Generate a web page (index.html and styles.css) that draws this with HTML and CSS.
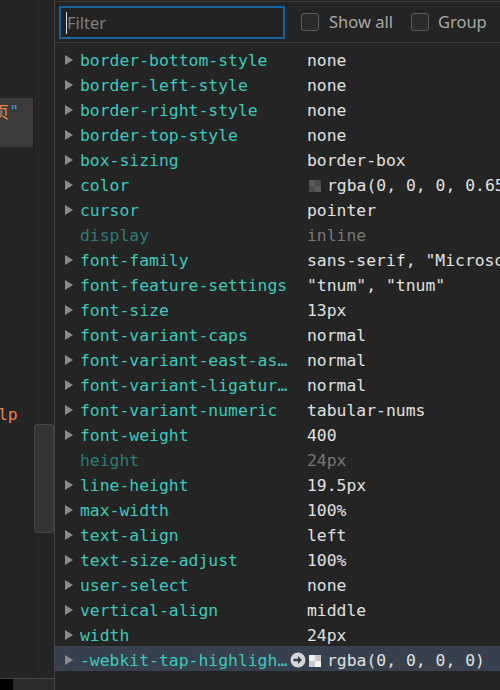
FILE: index.html
```html
<!DOCTYPE html>
<html>
<head>
<meta charset="utf-8">
<link rel="stylesheet" href="styles.css">
</head>
<body>
<div class="shell">
  <div class="side">
    <div class="side-top">
      <div class="editor">
        <div class="ed-line ed-sel"><span class="str">首页</span><span class="quote">"</span></div>
        <div class="ed-line ed-lp"><span class="str">lp</span></div>
      </div>
      <div class="track"><div class="thumb"></div></div>
    </div>
    <div class="side-bottom"><div class="blk"></div><div class="grey"></div></div>
  </div>
  <div class="panel">
    <div class="toolbar">
      <div class="filter"><span class="caret"></span><span class="ph">Filter</span></div>
      <label class="check"><span class="box"></span><span class="lbl">Show all</span></label>
      <label class="check check2"><span class="box"></span><span class="lbl">Group</span></label>
    </div>
    <div class="rows">
      <div class="row"><span class="tw"><svg width="8" height="10"><polygon points="0,0 8,5 0,10"/></svg></span><span class="nc"><span class="name">border-bottom-style</span></span><span class="val">none</span></div>
      <div class="row"><span class="tw"><svg width="8" height="10"><polygon points="0,0 8,5 0,10"/></svg></span><span class="nc"><span class="name">border-left-style</span></span><span class="val">none</span></div>
      <div class="row"><span class="tw"><svg width="8" height="10"><polygon points="0,0 8,5 0,10"/></svg></span><span class="nc"><span class="name">border-right-style</span></span><span class="val">none</span></div>
      <div class="row"><span class="tw"><svg width="8" height="10"><polygon points="0,0 8,5 0,10"/></svg></span><span class="nc"><span class="name">border-top-style</span></span><span class="val">none</span></div>
      <div class="row"><span class="tw"><svg width="8" height="10"><polygon points="0,0 8,5 0,10"/></svg></span><span class="nc"><span class="name">box-sizing</span></span><span class="val">border-box</span></div>
      <div class="row"><span class="tw"><svg width="8" height="10"><polygon points="0,0 8,5 0,10"/></svg></span><span class="nc"><span class="name">color</span></span><span class="val"><span class="sw sw-dark"></span>rgba(0, 0, 0, 0.65)</span></div>
      <div class="row"><span class="tw"><svg width="8" height="10"><polygon points="0,0 8,5 0,10"/></svg></span><span class="nc"><span class="name">cursor</span></span><span class="val">pointer</span></div>
      <div class="row inactive"><span class="tw"></span><span class="nc"><span class="name">display</span></span><span class="val">inline</span></div>
      <div class="row"><span class="tw"><svg width="8" height="10"><polygon points="0,0 8,5 0,10"/></svg></span><span class="nc"><span class="name">font-family</span></span><span class="val">sans-serif, "Microsoft YaHei"</span></div>
      <div class="row"><span class="tw"><svg width="8" height="10"><polygon points="0,0 8,5 0,10"/></svg></span><span class="nc"><span class="name">font-feature-settings</span></span><span class="val">"tnum", "tnum"</span></div>
      <div class="row"><span class="tw"><svg width="8" height="10"><polygon points="0,0 8,5 0,10"/></svg></span><span class="nc"><span class="name">font-size</span></span><span class="val">13px</span></div>
      <div class="row"><span class="tw"><svg width="8" height="10"><polygon points="0,0 8,5 0,10"/></svg></span><span class="nc"><span class="name">font-variant-caps</span></span><span class="val">normal</span></div>
      <div class="row"><span class="tw"><svg width="8" height="10"><polygon points="0,0 8,5 0,10"/></svg></span><span class="nc"><span class="name">font-variant-east-asian</span></span><span class="val">normal</span></div>
      <div class="row"><span class="tw"><svg width="8" height="10"><polygon points="0,0 8,5 0,10"/></svg></span><span class="nc"><span class="name">font-variant-ligatures</span></span><span class="val">normal</span></div>
      <div class="row"><span class="tw"><svg width="8" height="10"><polygon points="0,0 8,5 0,10"/></svg></span><span class="nc"><span class="name">font-variant-numeric</span></span><span class="val">tabular-nums</span></div>
      <div class="row"><span class="tw"><svg width="8" height="10"><polygon points="0,0 8,5 0,10"/></svg></span><span class="nc"><span class="name">font-weight</span></span><span class="val">400</span></div>
      <div class="row inactive"><span class="tw"></span><span class="nc"><span class="name">height</span></span><span class="val">24px</span></div>
      <div class="row"><span class="tw"><svg width="8" height="10"><polygon points="0,0 8,5 0,10"/></svg></span><span class="nc"><span class="name">line-height</span></span><span class="val">19.5px</span></div>
      <div class="row"><span class="tw"><svg width="8" height="10"><polygon points="0,0 8,5 0,10"/></svg></span><span class="nc"><span class="name">max-width</span></span><span class="val">100%</span></div>
      <div class="row"><span class="tw"><svg width="8" height="10"><polygon points="0,0 8,5 0,10"/></svg></span><span class="nc"><span class="name">text-align</span></span><span class="val">left</span></div>
      <div class="row"><span class="tw"><svg width="8" height="10"><polygon points="0,0 8,5 0,10"/></svg></span><span class="nc"><span class="name">text-size-adjust</span></span><span class="val">100%</span></div>
      <div class="row"><span class="tw"><svg width="8" height="10"><polygon points="0,0 8,5 0,10"/></svg></span><span class="nc"><span class="name">user-select</span></span><span class="val">none</span></div>
      <div class="row"><span class="tw"><svg width="8" height="10"><polygon points="0,0 8,5 0,10"/></svg></span><span class="nc"><span class="name">vertical-align</span></span><span class="val">middle</span></div>
      <div class="row"><span class="tw"><svg width="8" height="10"><polygon points="0,0 8,5 0,10"/></svg></span><span class="nc"><span class="name">width</span></span><span class="val">24px</span></div>
      <div class="row selected"><span class="tw"><svg width="8" height="10"><polygon points="0,0 8,5 0,10"/></svg></span><span class="nc"><span class="name">-webkit-tap-highlight-color</span><svg class="goto" width="16" height="16" viewBox="0 0 16 16"><circle cx="8" cy="8" r="7.5" fill="#d6d6d6"/><path d="M3.5 6.8h4.5V4L12 8l-4 4V9.2H3.5z" fill="#36414d"/></svg></span><span class="val"><span class="sw sw-clear"></span>rgba(0, 0, 0, 0)</span></div>
    </div>
  </div>
</div>
</body>
</html>
```
FILE: styles.css
```css
html, body {
  margin: 0;
  padding: 0;
  background: #242424;
  overflow: hidden;
}
.shell {
  display: flex;
  width: 500px;
  height: 690px;
}
.side {
  width: 54px;
  display: flex;
  flex-direction: column;
  flex: none;
}
.side-top {
  flex: 1;
  display: flex;
  min-height: 0;
}
.editor {
  width: 33px;
  background: #252526;
  border-right: 1px solid #1d1d1d;
  overflow: hidden;
  font-family: "DejaVu Sans Mono", monospace;
  font-size: 16.4px;
}
.ed-line {
  display: flex;
  justify-content: flex-end;
  white-space: nowrap;
  line-height: 25px;
}
.ed-sel {
  margin-top: 98px;
  height: 49px;
  background: #3a3a3a;
  padding-right: 14px;
  align-items: flex-start;
  padding-top: 1px;
  box-sizing: border-box;
}
.ed-sel .str {
  font-family: "Noto Sans CJK SC", sans-serif;
  font-size: 16px;
}
.ed-lp {
  justify-content: flex-start;
  margin-top: 255px;
  margin-left: -2px;
}
.str { color: #e8834e; }
.quote { color: #4b9fdc; }
.track {
  width: 20px;
  background: #242424;
  padding-top: 424px;
}
.thumb {
  height: 107px;
  background: #333333;
  border: 1px solid #474747;
  border-radius: 3px;
}
.side-bottom {
  height: 11px;
  border-top: 1px solid #474747;
  display: flex;
}
.blk { width: 13px; background: #000; }
.grey { flex: 1; background: #2b2b2b; }

.panel {
  flex: 1;
  border-left: 1px solid #444;
  overflow: hidden;
  padding-top: 1px;
  background: #242424;
}
.toolbar {
  border-top: 1px solid #3c3c3c;
  border-bottom: 1px solid #363636;
  height: 40px;
  display: flex;
  align-items: center;
  padding-left: 4px;
  font-family: "Noto Sans", sans-serif;
  font-size: 16.5px;
}
.filter {
  width: 217px;
  height: 29px;
  border: 2px solid #17619f;
  background: #222;
  display: flex;
  align-items: center;
  padding-left: 5px;
  box-sizing: content-box;
  margin-top: 1px;
}
.caret {
  width: 1px;
  height: 22px;
  background: #dcdcdc;
}
.ph {
  color: #808080;
  margin-top: -1px;
}
.check {
  display: flex;
  align-items: center;
  margin-left: 16px;
  color: #a8a8a8;
}
.check2 { margin-left: 18px; }
.box {
  width: 16px;
  height: 16px;
  border: 1px solid #5c5c5c;
  border-radius: 3px;
  background: #2a2a2a;
  margin-right: 10px;
}
.check2 .box { margin-right: 9px; }
.lbl { margin-top: -1px; }

.rows {
  padding-top: 3px;
  font-family: "DejaVu Sans Mono", monospace;
  font-size: 16.4px;
}
.row {
  height: 25px;
  box-sizing: border-box;
  padding-top: 4px;
  line-height: 21px;
  display: flex;
  align-items: flex-start;
  white-space: nowrap;
  padding-left: 10px;
}
.tw {
  width: 15px;
  flex: none;
  height: 21px;
  display: flex;
  align-items: center;
}
.tw svg { fill: #8a8a8a; display: block; margin-top: -1px; }
.nc {
  width: 227px;
  flex: none;
  display: flex;
  align-items: center;
  height: 21px;
}
.name {
  max-width: 210px;
  overflow: hidden;
  text-overflow: ellipsis;
  color: #3dc9bc;
}
.val {
  color: #e0e0e0;
  display: flex;
  align-items: center;
}
.inactive .name { color: #2b7d76; }
.inactive .val { color: #787878; }
.selected { background: #36414d; }
.goto { flex: none; margin-top: -1px; }
.sw {
  width: 12px;
  height: 12px;
  margin: 0 6px 0 2px;
  flex: none;
}
.sw-dark {
  background:
    linear-gradient(#5a5a5a, #5a5a5a) 0 0 / 6px 6px no-repeat,
    linear-gradient(#5a5a5a, #5a5a5a) 6px 6px / 6px 6px no-repeat,
    #4a4a4a;
}
.sw-clear {
  background:
    linear-gradient(#c9c9c9, #c9c9c9) 6px 0 / 6px 6px no-repeat,
    linear-gradient(#c9c9c9, #c9c9c9) 0 6px / 6px 6px no-repeat,
    #f2f2f2;
}
```
